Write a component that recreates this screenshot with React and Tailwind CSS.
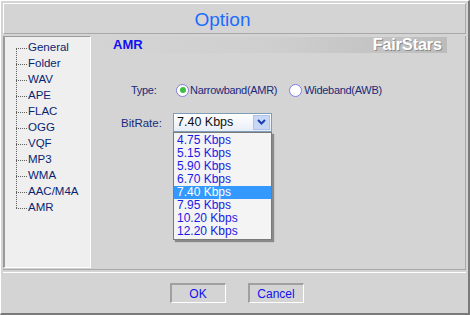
import React from "react";

const items = ["General","Folder","WAV","APE","FLAC","OGG","VQF","MP3","WMA","AAC/M4A","AMR"];
const rates = ["4.75 Kbps","5.15 Kbps","5.90 Kbps","6.70 Kbps","7.40 Kbps","7.95 Kbps","10.20 Kbps","12.20 Kbps"];
const sans = "'Liberation Sans', Arial, sans-serif";

export default function App() {
  return (
    <div className="w-[470px] h-[315px] bg-[#d4d4d4] relative overflow-hidden text-[11px]" style={{fontFamily: sans}}>
      <div className="w-[470px] h-[315px] border-t border-l border-white border-r-2 border-b-2 border-r-[#7a7a7a] border-b-[#7a7a7a] flex flex-col">
        {/* title */}
        <div className="mx-[2px] mt-[2px] h-[31px] border-t border-l border-white border-r border-b border-r-[#a8a8a8] border-b-[#a8a8a8] flex items-center justify-center pr-[24px] pt-[2px]">
          <span className="text-[19px] text-[#1a6cff] leading-none">Option</span>
        </div>
        {/* middle */}
        <div className="mx-[2px] mt-[2px] h-[234px] flex border-b border-b-[#a8a8a8] border-r border-r-[#a8a8a8] pr-[2px]">
          <div className="w-[88px] h-[232px] bg-[#efefef] border-l-2 border-t border-[#9a9a9a] border-r border-r-white border-b border-b-white relative pt-[3px]">
            <div className="absolute left-[11px] top-[11px] h-[160px] border-l border-dotted border-[#606060]" />
            {items.map((t) => (
              <div key={t} className="h-[16px] flex items-center pl-[11px]">
                <div className="w-[11px] border-t border-dotted border-[#606060]" />
                <span className="ml-[1px] text-[11.5px] text-[#0a2470]">{t}</span>
              </div>
            ))}
          </div>
          <div className="flex-1 flex flex-col pt-[1px]">
            <div className="h-[16px] mr-[16px] ml-[1px] flex items-center justify-between bg-gradient-to-r from-[#d4d4d4] via-[#cfcfcf] to-[#bcbcbc]">
              <span className="ml-[21px] font-bold text-[13px] text-[#1010f0]">AMR</span>
              <span className="mr-[5px] font-bold text-[16px] text-white" style={{textShadow: "1px 1px 0 #8a8a8a"}}>FairStars</span>
            </div>
            <div className="flex items-center mt-[29px] ml-[40px] text-[#1a2a7a] text-[11px]" style={{letterSpacing: "-0.3px"}}>
              <span className="w-[45px]">Type:</span>
              <span className="w-[13px] h-[13px] rounded-full border border-[#7f7fdf] bg-white flex items-center justify-center">
                <span className="w-[6px] h-[6px] rounded-full bg-[#3fbf3f]" />
              </span>
              <span className="ml-[1px]">Narrowband(AMR)</span>
              <span className="ml-[12px] w-[13px] h-[13px] rounded-full border border-[#7f7fdf] bg-white" />
              <span className="ml-[2px]">Wideband(AWB)</span>
            </div>
            <div className="flex mt-[14px] ml-[30px] text-[11.5px]">
              <span className="w-[52px] pt-[2px] text-[#1a2a7a]">BitRate:</span>
              <div className="relative w-[99px]">
                <div className="h-[19px] border border-[#7f9db9] bg-gradient-to-b from-white to-[#e8eef8] flex items-center">
                  <span className="ml-[3px] text-[12.5px] text-[#101010]">7.40 Kbps</span>
                  <span className="ml-auto mr-[1px] w-[17px] h-[15px] bg-[#c8d8f4] border border-[#b0c4e8] flex items-center justify-center">
                    <svg width="9" height="6" viewBox="0 0 9 6"><path d="M1 1 L4.5 4.5 L8 1" fill="none" stroke="#1a3fb0" strokeWidth="2" /></svg>
                  </span>
                </div>
                <div className="absolute left-0 top-[19px] w-[99px] h-[108px] bg-[#f4f4f4] border border-[#7a7a7a] shadow-[2px_2px_1px_rgba(0,0,0,0.35)] pt-[1px]">
                  {rates.map((r) => (
                    <div key={r} className={"h-[13px] flex items-center pl-[3px] text-[12px] " + (r === "7.40 Kbps" ? "bg-[#3399ff] text-white" : "text-[#1a1ae6]")}>{r}</div>
                  ))}
                </div>
              </div>
            </div>
          </div>
        </div>
        {/* bottom */}
        <div className="mx-[2px] mt-[2px] flex-1 border-t border-t-white flex justify-center items-start pt-[10px] gap-[22px] pl-[4px]">
          <button className="w-[56px] h-[20px] border-t-2 border-l-2 border-[#a0a0a0] border-r border-b border-r-white border-b-white text-[12px] text-[#1010f0] flex items-center justify-center">OK</button>
          <button className="w-[56px] h-[20px] border-t-2 border-l-2 border-[#a0a0a0] border-r border-b border-r-white border-b-white text-[12px] text-[#1010f0] flex items-center justify-center">Cancel</button>
        </div>
      </div>
    </div>
  );
}
